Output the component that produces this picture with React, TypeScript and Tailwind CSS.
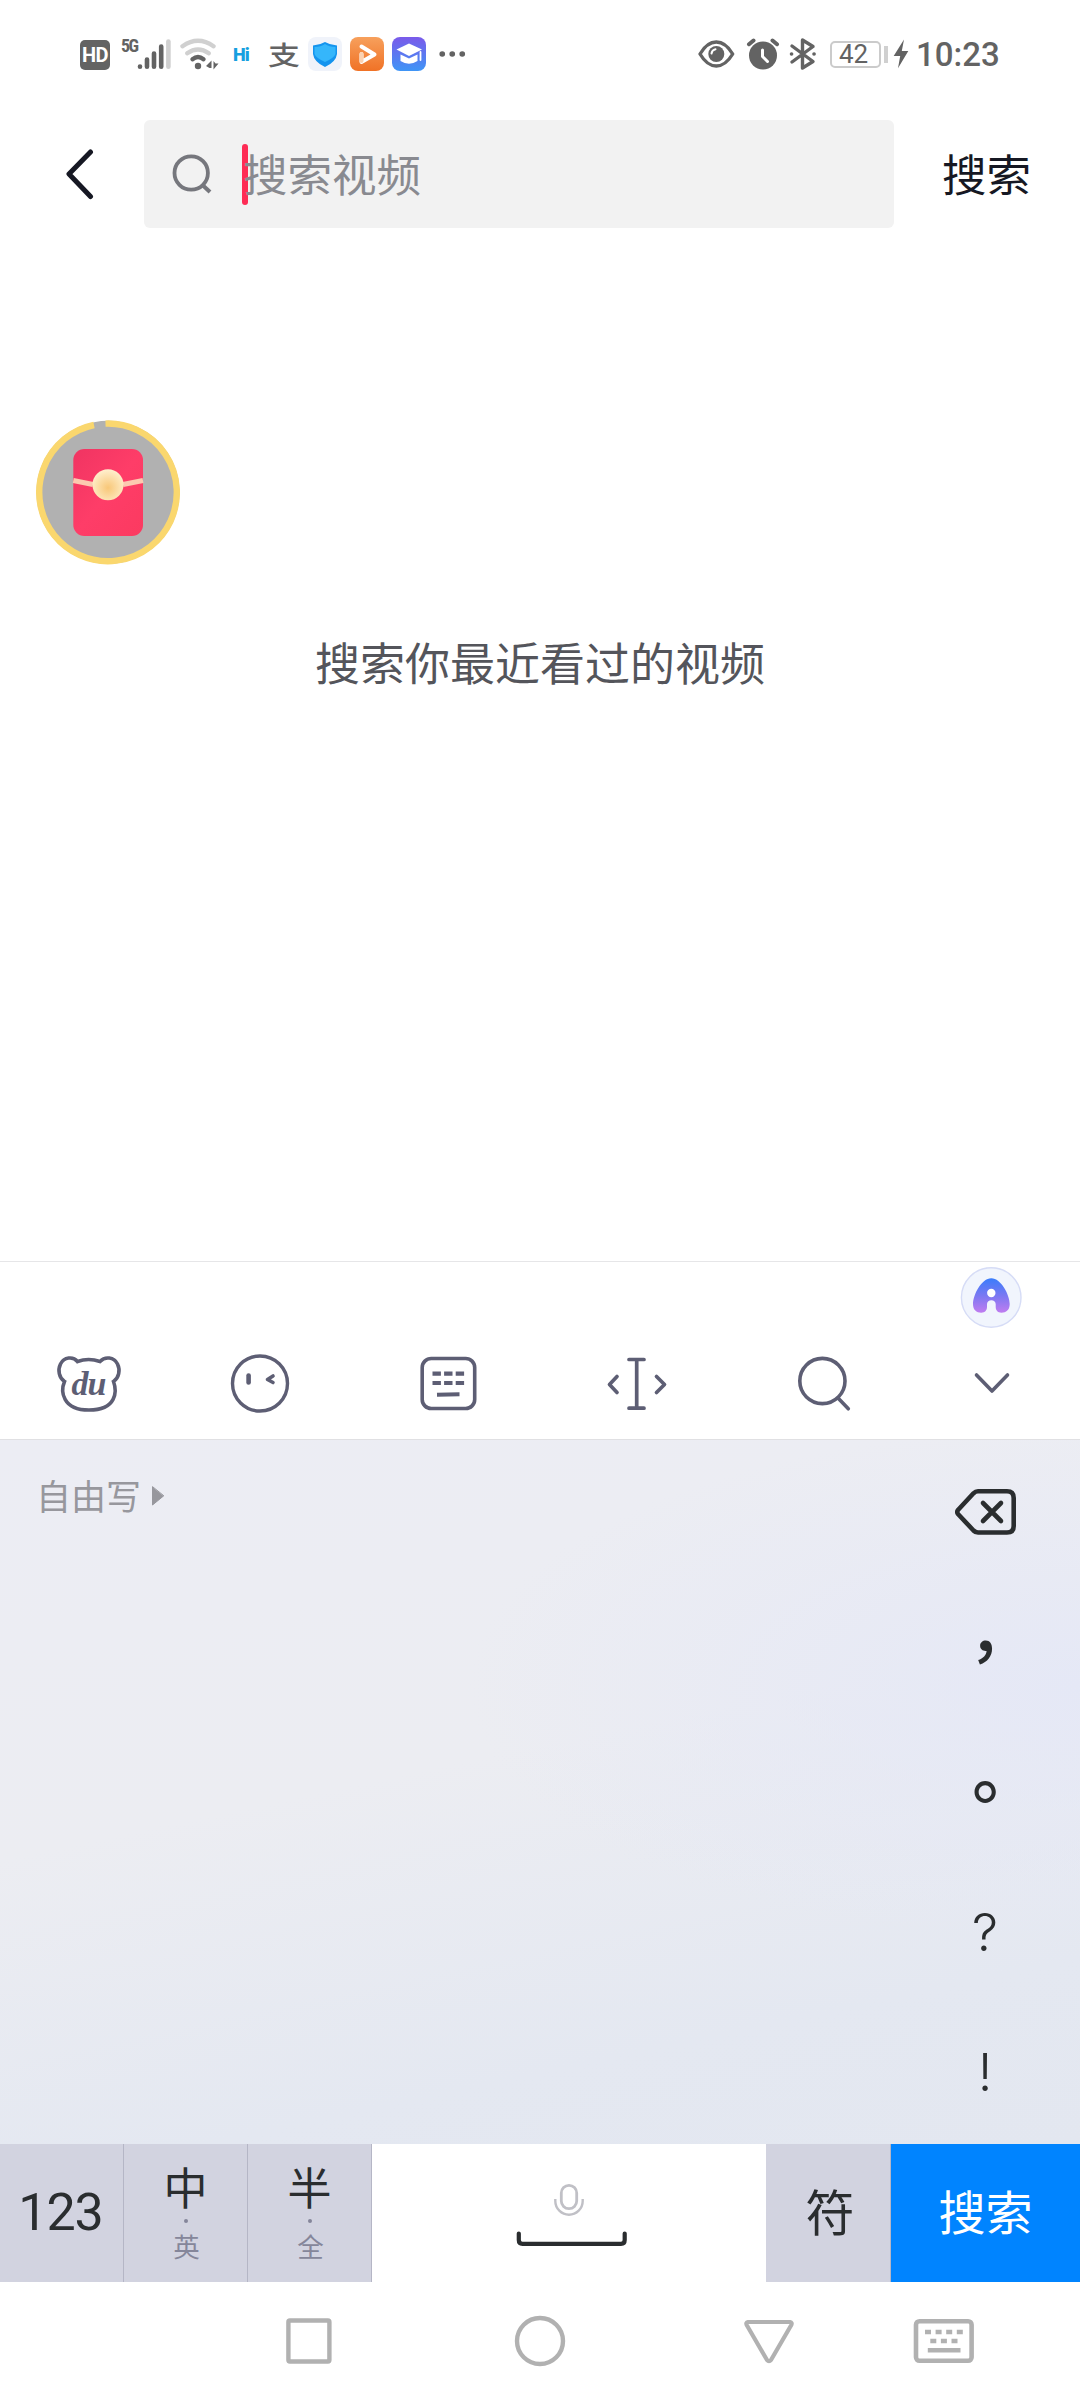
import type { ReactNode } from "react";

type IconProps = {
  // x, y, width and height of the drawing area
  box: [number, number, number, number];
  className?: string;
  children: ReactNode;
};

function Icon({ box, className = "", children }: IconProps) {
  return (
    <svg
      width={box[2]}
      height={box[3]}
      viewBox={box.join(" ")}
      fill="none"
      stroke="currentColor"
      strokeLinecap="round"
      strokeLinejoin="round"
      className={`block shrink-0 ${className}`}
    >
      {children}
    </svg>
  );
}

function StatusBar() {
  return (
    <div className="flex h-[108px] items-center pl-20 pr-[81px] text-[#636363]">
      <div className="mt-0.5 flex h-[30px] w-[30px] items-center justify-center rounded-[5px] bg-[#636363] font-[Roboto] text-[20px] font-bold tracking-tight text-white">
        HD
      </div>

      {/* Mobile signal */}
      <div className="ml-[11px] flex h-[30px] w-[50px]">
        <span className="-mt-px h-4 w-4 font-['Roboto_Condensed',Roboto] text-[18px] leading-4 font-bold tracking-[-1.5px]">
          5G
        </span>
        <Icon box={[137, 39, 34, 31]}>
          <g strokeWidth="4.6">
            <path d="M140 66.6v.2M147 59.5v7.3M154 53.5v13.3M161.2 46.5v20.3" />
            <path d="M168.4 41.5v25.3" stroke="#d0d0d0" />
          </g>
        </Icon>
      </div>

      {/* Wi-Fi */}
      <Icon box={[179, 38, 40, 32]} className="ml-2">
        <g strokeWidth="4.4">
          <path d="M182.500 46.200Q198 35.500 213.500 46.200" stroke="#d0d0d0" />
          <path d="M187.200 53.300Q198 45.500 208.800 53.300" stroke="#d0d0d0" />
          <path d="M192.500 59.200Q198 55 203.500 59.200" />
        </g>
        <circle cx="198" cy="66" r="3.200" fill="currentColor" stroke="none" />
        <path
          d="M211.500 60.500v7.500h-2l-3.500-2zM213.500 61v8.500l5-6h-3z"
          fill="currentColor"
          stroke="none"
        />
      </Icon>

      {/* Notification icons */}
      <span className="ml-[7px] flex h-[30px] w-[30px] items-center justify-center font-[Roboto] text-[18px] font-black tracking-tighter text-[#169fe0]">
        Hi
      </span>
      <span className="ml-3 w-8 scale-y-[.82] text-center text-[32px] leading-[30px] font-medium">
        支
      </span>
      <Icon box={[308, 37, 34, 34]} className="ml-[8px]">
        <rect x="308" y="37" width="34" height="34" rx="8" fill="#f0f3fa" stroke="none" />
        <path
          d="M325 42Q330 45 337 45.500V54Q336 62 325 67Q314 62 313 54V45.500Q320 45 325 42z"
          fill="#1594ee"
          stroke="none"
        />
        <path
          d="M325 44Q329 47 335.500 47V54Q334 58 325 62Q316 58 314.500 54V47Q321 47 325 44z"
          fill="#35b6fb"
          stroke="none"
        />
      </Icon>
      <Icon box={[350, 37, 34, 34]} className="ml-2">
        <defs>
          <linearGradient id="orange" x1="0" y1="0" x2="0" y2="1">
            <stop offset="0" stopColor="#f7a05c" />
            <stop offset="1" stopColor="#f07226" />
          </linearGradient>
        </defs>
        <rect x="350" y="37" width="34" height="34" rx="8" fill="url(#orange)" stroke="none" />
        <path d="M361.500 54V62L374.500 54.500L361.500 46.500" stroke="#fff" strokeWidth="4" />
        <path d="M361.500 54v7" stroke="#fbd2b2" strokeWidth="4" />
      </Icon>
      <Icon box={[392, 37, 34, 34]} className="ml-2">
        <defs>
          <linearGradient id="indigo" x1="0" y1="0" x2="0" y2="1">
            <stop offset="0" stopColor="#7a5aea" />
            <stop offset="1" stopColor="#3f95f6" />
          </linearGradient>
        </defs>
        <rect x="392" y="37" width="34" height="34" rx="8" fill="url(#indigo)" stroke="none" />
        <path d="M409 43.500L422 49.500L409 56L396.500 49.500z" fill="#fff" stroke="none" />
        <path d="M400.500 54.500L409 58.500L417.500 54.500V61Q409 66.500 400.500 61z" fill="#fff" stroke="none" />
        <path d="M420.500 52v8" stroke="#fff" strokeWidth="1.800" />
      </Icon>
      <Icon box={[438, 50, 28, 8]} className="ml-3">
        <path d="M442.200 54h.1M452.200 54h.1M462.200 54h.1" strokeWidth="5.600" />
      </Icon>

      {/* System icons */}
      <Icon box={[698, 38, 37, 32]} className="ml-auto">
        <path
          d="M700 54Q707 42 716.300 42T732.700 54Q725.500 66 716.300 66T700 54z"
          strokeWidth="3.400"
        />
        <circle cx="716.300" cy="54" r="8" fill="currentColor" stroke="none" />
        <path d="M711.500 53.500Q712 50 715.500 49.300" stroke="#fff" strokeWidth="2" />
      </Icon>
      <Icon box={[746, 38, 34, 32]} className="ml-[11px]">
        <circle cx="763" cy="55.500" r="14" fill="currentColor" stroke="none" />
        <path d="M749 44.200L753.500 40.500M777 44.200L772.500 40.500" strokeWidth="4" />
        <path d="M762.500 50V56.500L767.500 61.500" stroke="#fff" strokeWidth="3" />
      </Icon>
      <Icon box={[789, 37, 28, 34]} className="ml-[9px]">
        <path
          d="M792 46L813 61.500L802.500 68V40L813 46.500L792 62"
          strokeWidth="3.400"
        />
        <path d="M791.500 54h.1M814 54h.1" strokeWidth="3.600" />
      </Icon>
      <div className="ml-[13px] flex h-[27px] w-[51px] items-center justify-center rounded-[5px] border-2 border-[#cbcbcb] pr-1 font-[Roboto] text-[26px] leading-none">
        42
      </div>
      <span className="ml-[3px] h-[17px] w-1 bg-[#d0d0d0]" />
      <Icon box={[893, 40, 16, 30]} className="ml-[5px]">
        <path
          d="M904 40.500L893.700 57H900.200L898 69.300L908.300 52H901.800z"
          fill="currentColor"
          stroke="none"
        />
      </Icon>
      <span className="mt-px ml-[7px] w-[83px] whitespace-nowrap font-[Roboto] text-[33px] leading-none font-medium">
        10:23
      </span>
    </div>
  );
}

function SearchHeader() {
  return (
    <div className="flex items-center pt-3 pl-[66px]">
      <Icon box={[66, 148, 30, 52]} className="text-[#161823]">
        <path d="M90.500 152L69 174L90.500 196.500" strokeWidth="5" />
      </Icon>
      <div className="ml-12 flex h-[108px] w-[750px] items-center rounded-md bg-[#f2f2f2] pl-7">
        <Icon box={[172, 153, 42, 42]} className="text-[#76777d]">
          <circle cx="191.200" cy="173" r="16.700" strokeWidth="3.800" />
          <path d="M203 185.500L210 192" strokeWidth="4" strokeLinecap="butt" />
        </Icon>
        <div className="relative ml-7 h-[61px] w-1.5 rounded-full bg-[#fe2c55]" />
        <span className="relative -ml-[5px] pb-px text-[44.500px] leading-none text-[#898a90]">
          搜索视频
        </span>
      </div>
      <span className="ml-12 pb-px text-[44.500px] leading-none text-[#161823]">搜索</span>
    </div>
  );
}

function RedPacket() {
  return (
    <Icon box={[36, 420, 144, 146]} className="ml-9 mt-48">
      <defs>
        <radialGradient id="coin" cx=".5" cy=".6" r=".6">
          <stop offset="0" stopColor="#f8c778" />
          <stop offset="1" stopColor="#fff0cf" />
        </radialGradient>
        <linearGradient id="packet" x1="0" y1="0" x2="1" y2="1">
          <stop offset="0" stopColor="#f03462" />
          <stop offset=".5" stopColor="#fe3d68" />
          <stop offset="1" stopColor="#fb3a60" />
        </linearGradient>
      </defs>
      <circle cx="108" cy="492.300" r="71.500" fill="#b1b1b1" stroke="none" />
      <path
        d="M105.500 423.600A68.800 68.800 0 1 1 94 425"
        stroke="#fad76e"
        strokeWidth="6.400"
        strokeLinecap="butt"
      />
      <rect x="73.300" y="449" width="69.700" height="87" rx="11" fill="url(#packet)" stroke="none" />
      <path
        d="M73.300 480.500L93 484.500M123 484.500L143 480.500"
        stroke="#fcc9b0"
        strokeWidth="5"
        strokeLinecap="butt"
      />
      <circle cx="108" cy="484.700" r="15.500" fill="url(#coin)" stroke="none" />
    </Icon>
  );
}

function Toolbar() {
  return (
    <div className="relative flex h-[178px] items-end border-t border-[#e6e6e8] pb-[26px] pl-14 text-[#5d5e74]">
      <Icon box={[56, 1355, 67, 59]}>
        <path
          d="M64.500 1382.500C59 1379 57.500 1371 60.500 1365C64 1358 73 1357 77.500 1362.500Q88.500 1358.500 100 1362.500C105 1357 114 1358 117.500 1365C120.500 1371 119 1379 113.500 1382.500C117 1392 117 1411 89 1411C62 1411 60.500 1392 64.500 1382.500z"
          strokeWidth="3.600"
          strokeLinejoin="miter"
        />
        <text
          x="88.500"
          y="1396"
          textAnchor="middle"
          className="fill-current stroke-none font-['Liberation_Serif'] text-[34px] font-bold tracking-[-1px] italic"
        >
          du
        </text>
      </Icon>
      <Icon box={[230, 1354, 60, 60]} className="ml-[107px]">
        <circle cx="260" cy="1384.500" r="27.500" strokeWidth="3.400" />
        <path d="M248.600 1376.500v7" strokeWidth="4.600" />
        <path d="M273 1377L267.500 1380.500L273 1383.500" strokeWidth="3.600" />
      </Icon>
      <Icon box={[419, 1355, 59, 57]} className="ml-[129px]">
        <rect x="422.200" y="1357.500" width="52.500" height="50" rx="9" strokeWidth="3.600" />
        <path
          d="M432.500 1372.700H465M432.500 1382H465"
          strokeWidth="4.200"
          strokeDasharray="8.400 3.200"
          strokeLinecap="butt"
        />
        <path d="M437 1393.700L459.500 1393.300" strokeWidth="4" strokeLinecap="butt" />
      </Icon>
      <Icon box={[606, 1356, 62, 56]} className="ml-32">
        <path
          d="M629 1358.500H644M629 1407.200H644M636.700 1359V1407M617 1375.500L609.500 1383.500L617 1391.500M656.500 1375.500L664.500 1383.500L656.500 1391.500"
          strokeWidth="3.700"
        />
      </Icon>
      <Icon box={[797, 1355, 55, 57]} className="ml-[129px]">
        <circle cx="822.400" cy="1380" r="22.600" strokeWidth="3.600" />
        <path d="M838 1397L848.300 1407.800" strokeWidth="3.600" />
      </Icon>
      <Icon box={[973, 1371, 38, 24]} className="mb-[18px] ml-[121px]">
        <path d="M976.500 1375L992 1391L1007.500 1375" strokeWidth="3.600" />
      </Icon>

      {/* Assistant badge floating over the toolbar */}
      <Icon box={[960, 1267, 62, 62]} className="absolute top-[5px] right-[58px]">
        <defs>
          <linearGradient id="assistant" x1="0" y1="0" x2="0" y2="1">
            <stop offset="0" stopColor="#3a7dfb" />
            <stop offset=".5" stopColor="#7a78f2" />
            <stop offset="1" stopColor="#c07cf0" />
          </linearGradient>
        </defs>
        <circle cx="991.200" cy="1297.500" r="29.800" fill="#f1f5fd" stroke="#d6dcf6" strokeWidth="1.400" />
        <path
          d="M991.300 1278.300C1001 1278.300 1009.700 1295 1009.700 1304C1009.700 1310 1006 1312.700 1001.500 1312.700C997.500 1312.700 995.700 1310 995.700 1307V1304A4.400 4.400 0 0 0 987 1304V1307C987 1310 985.200 1312.700 981.200 1312.700C976.500 1312.700 973 1310 973 1304C973 1295 981.500 1278.300 991.300 1278.300z"
          fill="url(#assistant)"
          stroke="none"
        />
        <circle cx="991.300" cy="1293" r="4.200" fill="#fff" stroke="none" />
      </Icon>
    </div>
  );
}

function WritingPad() {
  return (
    <div className="flex h-[705px] justify-between border-t border-[#e0e0e3] bg-[radial-gradient(ellipse_at_100%_35%,#e5e8f6_0%,#e5e8f600_40%),linear-gradient(168deg,#ecedf4_0%,#ecedf2_45%,#e4e8f1_80%,#e3e7f0_100%)] text-[#2a2d2f]">
      <div className="mt-[36px] flex h-9 items-center pl-[36px] text-[#97979d]">
        <span className="text-[35px] leading-none">自由写</span>
        <Icon box={[151, 1486, 14, 22]} className="mt-1 ml-2.5">
          <path d="M152.500 1488V1506L163.500 1497z" fill="currentColor" strokeWidth="1" />
        </Icon>
      </div>
      <div className="flex w-[190px] flex-col items-center pt-[48px]">
        <Icon box={[954, 1488, 63, 48]}>
          <path
            d="M978 1491.300H1007Q1013.700 1491.300 1013.700 1498V1526Q1013.700 1532.500 1007 1532.500H978Q975.500 1532.500 973.500 1530.500L958 1514Q956.500 1512 958 1510L973.500 1493.300Q975.500 1491.300 978 1491.300z"
            strokeWidth="4.600"
          />
          <path d="M983 1503L1001 1521M1001 1503L983 1521" strokeWidth="4.600" />
        </Icon>
        <span className="mt-[42px] h-[140px] pl-[33px] text-[66px] leading-[98px] font-medium">，</span>
        <span className="h-[140px] pl-[42px] text-[68px] leading-[101px] font-medium">。</span>
        <span className="h-[140px] font-[Inter] text-[52px] leading-[150px] font-light">?</span>
        <span className="h-[140px] font-[Inter] text-[52px] leading-[150px] font-light">!</span>
      </div>
    </div>
  );
}

function ToggleKey({ main, sub }: { main: string; sub: string }) {
  return (
    <div className="flex w-[124px] flex-col items-center border-r border-[#b5b6c6] bg-[#d2d3e0] pt-5">
      <span className="text-[44px] leading-[44px] text-[#2a2d2f]">{main}</span>
      <span className="mt-[11px] h-1 w-1 rounded-full bg-[#85869a]" />
      <span className="mt-[9px] pl-0.5 text-[26.500px] leading-[27px] text-[#85869a]">{sub}</span>
    </div>
  );
}

function KeyRow() {
  return (
    <div className="flex h-[138px] text-[#2a2d2f]">
      <div className="flex w-[124px] items-center justify-center border-r border-[#b5b6c6] bg-[#d2d3e0] pr-0.5 font-[Roboto] text-[52px] tracking-[-1px]">
        123
      </div>
      <ToggleKey main="中" sub="英" />
      <ToggleKey main="半" sub="全" />
      <div className="flex flex-1 flex-col items-center bg-white pt-[39px]">
        <Icon box={[553, 2183, 32, 34]} className="text-[#c0c0c6]">
          <rect x="561.300" y="2185.300" width="15.400" height="23.400" rx="7.700" strokeWidth="2.800" />
          <path d="M555.300 2199V2201A13.700 13.700 0 0 0 582.700 2201V2199" strokeWidth="2.400" strokeLinecap="butt" />
        </Icon>
        <Icon box={[515, 2230, 114, 18]} className="mt-[13px] ml-1.5">
          <path d="M518.800 2233.500V2240Q518.800 2243.800 522.500 2243.800H621Q624.700 2243.800 624.700 2240V2233.500" strokeWidth="4.200" />
        </Icon>
      </div>
      <div className="flex w-[125px] items-center justify-center border-r border-[#b5b6c6] bg-[#d2d3e0] pb-2 pl-1 text-[49px] leading-none">
        符
      </div>
      <div className="flex w-[189px] items-center justify-center bg-[#0084ff] pb-[7px] text-[47px] leading-none text-white">
        搜索
      </div>
    </div>
  );
}

function NavigationBar() {
  return (
    <div className="flex h-[118px] items-center bg-white pl-[285px] text-[#b1b1b1]">
      <Icon box={[285, 2317, 48, 48]}>
        <rect x="288.400" y="2320.500" width="41" height="41" rx="1.500" strokeWidth="4.400" />
      </Icon>
      <Icon box={[514, 2315, 52, 52]} className="ml-[181px]">
        <circle cx="540" cy="2341" r="23" strokeWidth="4.400" />
      </Icon>
      <Icon box={[743, 2317, 52, 48]} className="ml-[177px]">
        <path
          d="M748 2322H790Q792.500 2322.500 791.300 2325L771 2360Q769 2362.500 767 2360L746.700 2325Q745.500 2322.500 748 2322z"
          strokeWidth="4.200"
        />
      </Icon>
      <Icon box={[913, 2317, 62, 48]} className="ml-[118px]">
        <rect x="916" y="2321.200" width="55.600" height="39.600" rx="3.500" strokeWidth="4.600" />
        <g strokeWidth="4.400" strokeLinecap="butt">
          <path d="M925 2332H963" strokeDasharray="6 4.600" />
          <path d="M930.300 2341H958" strokeDasharray="6 4.600" />
          <path d="M927.800 2350.200H960.500" />
        </g>
      </Icon>
    </div>
  );
}

export default function App() {
  return (
    <div className="flex h-[2400px] w-[1080px] flex-col overflow-hidden bg-white font-['Noto_Sans_CJK_SC',sans-serif]">
      <StatusBar />
      <SearchHeader />
      <main className="flex flex-1 flex-col">
        <RedPacket />
        <p className="mt-[73px] text-center text-[45px] leading-[45px] text-[#54555b]">
          搜索你最近看过的视频
        </p>
      </main>
      <Toolbar />
      <WritingPad />
      <KeyRow />
      <NavigationBar />
    </div>
  );
}
